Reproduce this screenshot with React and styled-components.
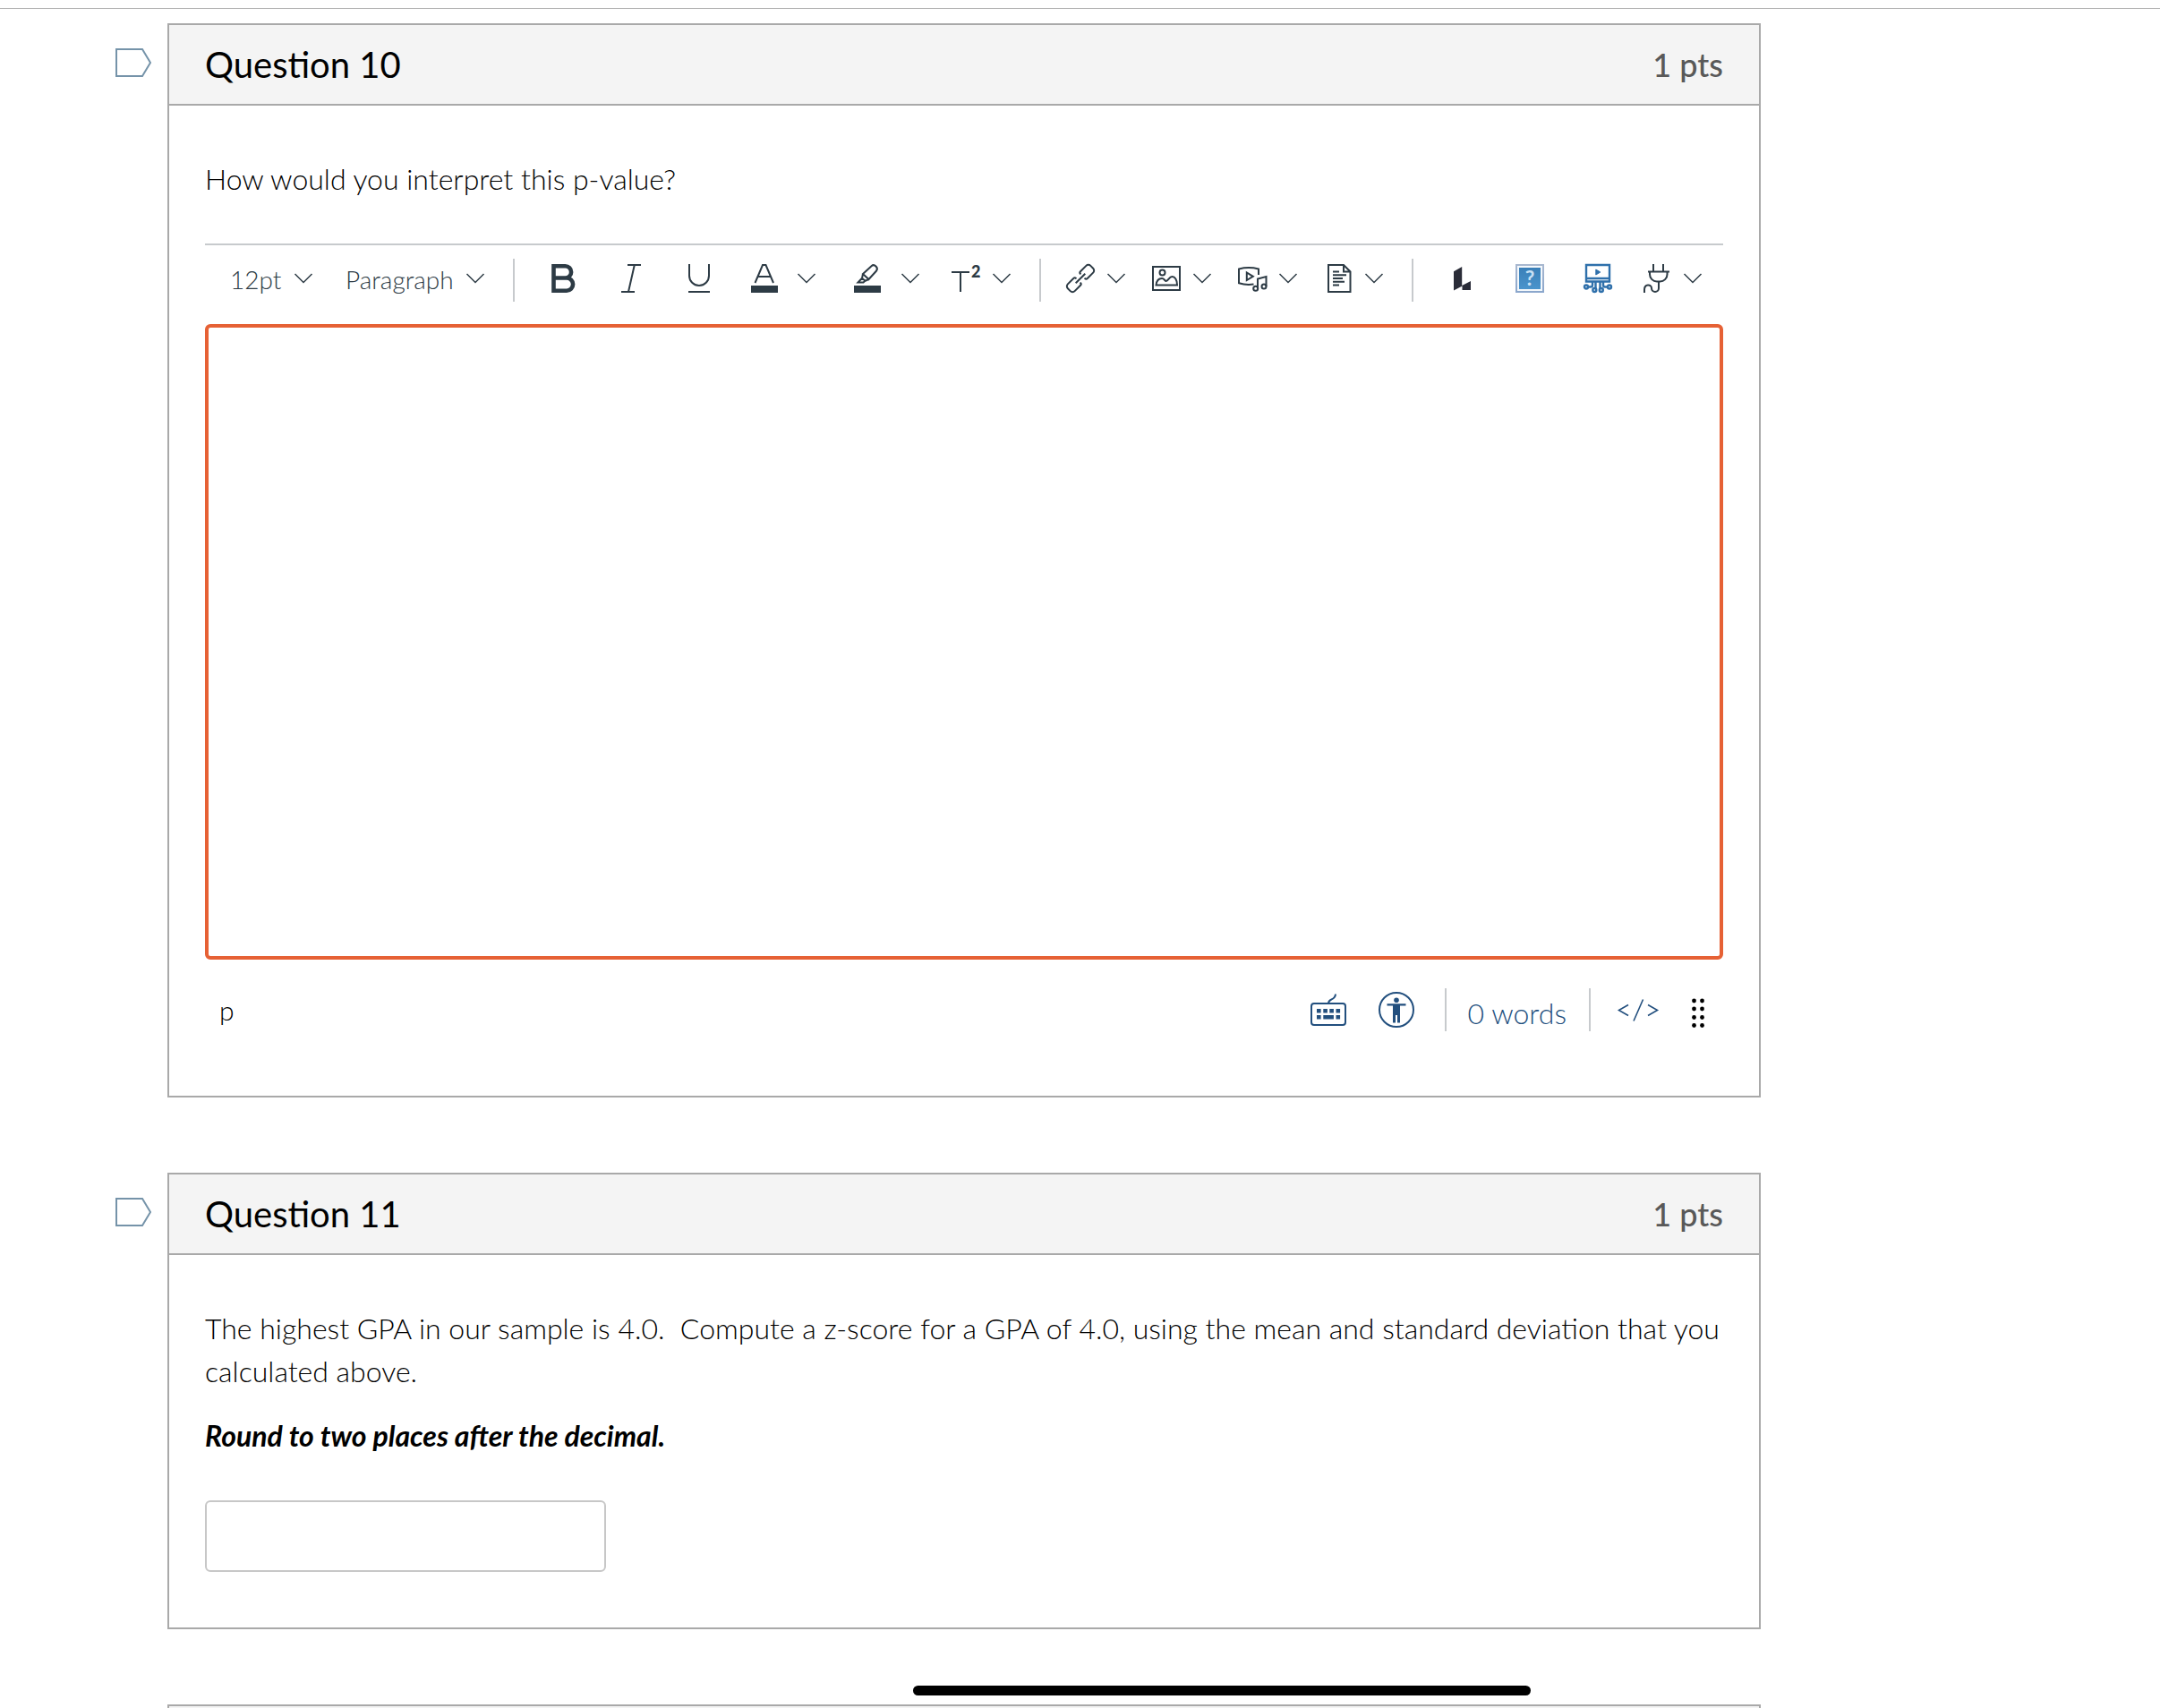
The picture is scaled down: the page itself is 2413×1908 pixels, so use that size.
import styled, { createGlobalStyle } from "styled-components";

const GlobalStyle = createGlobalStyle`
  * {
    box-sizing: border-box;
  }

  body {
    margin: 0;
    background: #fff;
    color: #000;
    font-family: Lato, "Noto Sans", sans-serif;
    font-size: 32px;
    font-weight: 300;
    line-height: 48px;
  }

  button,
  input,
  select,
  textarea {
    font: inherit;
    color: inherit;
  }
`;

/* ---------- icons ---------- */

const Stroke = styled.svg`
  display: block;
  flex: none;
  overflow: visible;
  fill: none;
  stroke: currentColor;
  stroke-width: ${({ weight }) => weight || 2};
`;

const Box32 = ({ children }) => (
  <Stroke width="32" height="32" viewBox="0 0 32 32">
    {children}
  </Stroke>
);

const Chevron = () => (
  <Stroke width="20" height="12" viewBox="0 0 20 12" weight="1.5">
    <path d="M0.5 1L10 10.5 19.5 1" />
  </Stroke>
);

const BoldIcon = () => (
  <Box32>
    <path
      strokeWidth="4.6"
      d="M5.5 2.3H18.5a6 6 0 0 1 0 13.2H5.5zM5.5 15.5H20a7 7 0 0 1 0 14.2H5.5z"
    />
  </Box32>
);

const ItalicIcon = () => (
  <Box32>
    <path d="M12 1h15M5 31h15M19.8 1L13 31" />
  </Box32>
);

const UnderlineIcon = () => (
  <Box32>
    <path d="M5 0v13a11 11 0 0 0 22 0V0M4 31h24" />
  </Box32>
);

const TextColorIcon = () => (
  <Box32>
    <path d="M5.5 21L14 1h3.500L26 21M9 14h13.500" />
    <path strokeWidth="8" d="M1 28h30" />
  </Box32>
);

const HighlightIcon = () => (
  <Box32>
    <path d="M10 11L19.500 2.200q2.500-2.200 5 .3t.6 5L16.500 17zM10 11l-1 4.800L4.500 20.500h6l1.500-1.500 4.500-2M9 15.800l3.500 3" />
    <path strokeWidth="8" d="M0 28h30" />
  </Box32>
);

const SuperText = styled.text`
  fill: currentColor;
  stroke: none;
  font-family: Lato, sans-serif;
  font-size: 18px;
  font-weight: 900;
`;

const SuperscriptIcon = () => (
  <Box32>
    <path d="M0 9h20M10 9v22" />
    <SuperText x="22" y="15">
      2
    </SuperText>
  </Box32>
);

const LinkIcon = () => (
  <Box32>
    <g transform="rotate(-45 16 16)">
      <path d="M12.500 19v.500a2 2 0 0 1-2 2H1.500A3.500 3.500 0 0 1-2 18v-4a3.500 3.500 0 0 1 3.500-3.500h9a2 2 0 0 1 2 2v.500" />
      <path d="M19.500 13v-.500a2 2 0 0 1 2-2h9A3.500 3.500 0 0 1 34 14v4a3.500 3.500 0 0 1-3.500 3.500h-9a2 2 0 0 1-2-2V19" />
      <path d="M8.500 16h15" />
    </g>
  </Box32>
);

const ImageIcon = () => (
  <Box32>
    <path d="M1 3h30v26H1z" />
    <circle cx="11.5" cy="9.5" r="3" />
    <path d="M4.500 23.500h23.500c0-6-2.500-9.500-5.500-9.500-3.500 0-4 4.500-7 5-1.500-.5-2-3-4.500-3-3.500 0-6 3-6.500 7.500z" />
  </Box32>
);

const MediaIcon = () => (
  <Box32>
    <path d="M23 12V5.500C16 3.700 8 3.700 1 5.500v15.800c5 1.500 11 2 16.500 1.200" />
    <path d="M9.800 9.500v8.500l7-4.200z" />
    <path d="M22 27.500V16.500l9.500-2.500v11" />
    <circle cx="19.7" cy="27.3" r="2.500" />
    <circle cx="29" cy="25" r="2.500" />
  </Box32>
);

const DocumentIcon = () => (
  <Box32>
    <path d="M5 1h17l7.500 7.500V31H5zM22 1v7.500h7.500" />
    <path d="M10 8.500h7M10 12.300h15M10 16h11M10 19.700h13M10 23.400h7" />
  </Box32>
);

const LucidIcon = () => (
  <Box32>
    <path
      fill="#2a2c38"
      stroke="none"
      d="M7 8.300L16.200 3v21L26 19v10H16.500v-4.500L7 29.500z"
    />
  </Box32>
);

const HelpMark = styled.text`
  fill: #c9e0f4;
  stroke: none;
  font-family: Lato, sans-serif;
  font-size: 23px;
  font-weight: 700;
  text-anchor: middle;
`;

const HelpIcon = () => (
  <Box32>
    <defs>
      <linearGradient id="helpFrame" x1="0" y1="0" x2="0" y2="1">
        <stop offset="0" stopColor="#a9b8d0" />
        <stop offset="1" stopColor="#8aa6cc" />
      </linearGradient>
      <linearGradient id="helpFill" x1="0" y1="0" x2="0" y2="1">
        <stop offset="0" stopColor="#3a7fb8" />
        <stop offset="1" stopColor="#4a94cc" />
      </linearGradient>
    </defs>
    <path stroke="none" fill="url(#helpFrame)" d="M0 0h32v32H0z" />
    <path stroke="none" fill="#f4f8fc" d="M2 2h28v28H2z" />
    <path stroke="none" fill="url(#helpFill)" d="M4 4h24v24H4z" />
    <HelpMark x="16" y="24">
      ?
    </HelpMark>
  </Box32>
);

const StudioIcon = () => (
  <Box32>
    <g stroke="#2f70ab" strokeWidth="2.400">
      <path d="M3 1h26v18.500H3zM3 16h26" />
      <path fill="#2f70ab" strokeWidth="1" d="M13.800 6v6l5-3z" />
      <path d="M10 20v3.500q0 2-2 2H5M13.500 20v7M18.500 20v7M22 20v3.500q0 2 2 2h3" />
      <circle cx="3" cy="25.5" r="2" />
      <circle cx="12.300" cy="29" r="2" />
      <circle cx="19.800" cy="29" r="2" />
      <circle cx="29" cy="25.5" r="2" />
    </g>
  </Box32>
);

const PlugIcon = () => (
  <Box32>
    <path d="M12 0v8M23 0v8M6 8.500h24M8 8.500v3a8 8 0 0 0 8 8h3.500a8 8 0 0 0 8-8v-3" />
    <path d="M18 19.500v7.500a4 4 0 0 1-8 0c0-5-8-5-8 1.500v3.500" />
  </Box32>
);

const KeyboardIcon = () => (
  <Stroke width="40" height="36" viewBox="0 0 40 36">
    <rect x="1" y="11" width="38" height="24" rx="3" />
    <path d="M20 11c0-6 7.500-3 8-10.500" />
    <path
      stroke="none"
      fill="currentColor"
      d="M7 17h4.600v4.600H7zM14.300 17h4.600v4.600h-4.600zM21.300 17h4.600v4.600h-4.600zM28.500 17h4.600v4.600h-4.600zM7 24h4.600v4.600H7zM14.300 24h11.600v4.600H14.300zM28.500 24h4.600v4.600h-4.600z"
    />
  </Stroke>
);

const AccessibilityIcon = () => (
  <Stroke width="40" height="40" viewBox="0 0 40 40">
    <circle cx="20" cy="20" r="19" />
    <g stroke="none" fill="currentColor">
      <circle cx="20" cy="9.300" r="2.800" />
      <path d="M9.500 13.200h21v2.300h-6.500V34.500h-3V26h-2v8.500h-3V15.500H9.500z" />
    </g>
  </Stroke>
);

const CodeIcon = () => (
  <Stroke width="46" height="26" viewBox="0 0 46 26" weight="1.6">
    <path d="M12 6.500L1.500 12.500 12 18.500M28.500 0.500L18 24.500M34 6.500l10.500 6-10.500 6" />
  </Stroke>
);

const GripIcon = () => (
  <Stroke width="16" height="34" viewBox="0 0 16 34">
    {[3, 12, 21.5, 30.5].map((y) => (
      <g key={y} stroke="none" fill="#000">
        <circle cx="3.500" cy={y} r="2.400" />
        <circle cx="12.500" cy={y} r="2.400" />
      </g>
    ))}
  </Stroke>
);

/* ---------- page ---------- */

const Page = styled.main`
  height: 100vh;
  overflow: hidden;
  display: flex;
  flex-direction: column;
`;

const TopEdge = styled.div`
  flex: none;
  height: 10px;
  border-bottom: 1px solid #b5b5b5;
`;

const QuestionList = styled.div`
  display: flex;
  flex-direction: column;
  gap: 84px;
  padding: 16px 446px 0 129px;
`;

const QuestionRow = styled.section`
  display: grid;
  grid-template-columns: 58px minmax(0, 1fr);
  align-items: start;
`;

const FlagButton = styled.button`
  margin: 28px 0 0;
  padding: 0;
  border: 0;
  background: none;
  color: #7593a9;
  justify-self: start;
`;

const Card = styled.div`
  grid-column: 2;
  border: 2px solid #a9a9a9;
`;

const CardHeader = styled.header`
  display: flex;
  justify-content: space-between;
  align-items: center;
  height: 90px;
  padding: 0 40px;
  background: #f4f4f4;
  border-bottom: 2px solid #a9a9a9;
`;

const Title = styled.h2`
  margin: 0;
  font-size: 40px;
  font-weight: 400;
`;

const Points = styled.span`
  font-size: 36px;
  font-weight: 500;
  color: #595959;
`;

const CardBody = styled.div`
  padding: 58px 40px 62px;
`;

const Prompt = styled.p`
  margin: 0 0 24px;
`;

const Hint = styled.label`
  display: block;
  margin-bottom: 48px;
  font-style: italic;
  font-weight: 700;
`;

const Answer = styled.input`
  display: block;
  width: 448px;
  height: 80px;
  padding: 0 16px;
  border: 2px solid #c7c7c7;
  border-radius: 6px;
  outline: none;
`;

/* ---------- editor ---------- */

const Toolbar = styled.div`
  display: flex;
  gap: 2px;
  margin-top: 48px;
  padding: 15px 0 25px 28px;
  border-top: 2px solid #c7cacd;
  color: #2d3b45;
`;

const Divider = styled.span`
  width: 2px;
  height: 48px;
  margin: 0 14px;
  background: #c7cacd;
`;

const ToolButton = styled.button`
  display: flex;
  align-items: center;
  height: 44px;
  padding: 0 20px 0 22px;
  border: 0;
  background: none;
`;

const MenuButton = styled(ToolButton)`
  gap: 14px;
  padding: 0 16px 0 12px;
`;

const SplitButton = styled(ToolButton)`
  gap: 21px;
  padding: 0 22px 0 19px;
`;

const Picker = styled.label`
  display: flex;
  align-items: center;
  gap: 14px;
  height: 44px;
  padding-right: ${({ $last }) => ($last ? 16 : 35)}px;
`;

const PickerSelect = styled.select`
  appearance: none;
  height: 44px;
  padding: 2px 0 0;
  border: 0;
  background: none;
  font-size: 28px;
  line-height: 42px;
`;

const EditArea = styled.textarea`
  display: block;
  width: 100%;
  height: 710px;
  padding: 16px;
  border: 4px solid #e66135;
  border-radius: 6px;
  outline: none;
  resize: none;
`;

const StatusBar = styled.div`
  display: flex;
  align-items: center;
  justify-content: space-between;
  margin: 32px 0 10px;
  padding: 0 20px 0 16px;
`;

const ElementPath = styled.span`
  font-size: 30px;
`;

const StatusTools = styled.div`
  display: flex;
  align-items: center;
  color: #224f7e;
`;

const StatusDivider = styled(Divider)`
  margin: 0 16px;
`;

const StatusButton = styled.button`
  display: flex;
  align-items: center;
  height: 48px;
  padding: 0 18px;
  border: 0;
  background: none;
`;

const WordCount = styled(StatusButton)`
  padding: 8px 9px 0 8px;
`;

const CodeButton = styled(StatusButton)`
  padding: 2px 14px 0;
`;

const Grip = styled(StatusButton)`
  padding: 8px 0 0 22px;
`;

const Question = ({ number, children }) => (
  <QuestionRow>
    <FlagButton aria-label={"Flag question " + number}>
      <Stroke width="40" height="32" viewBox="0 0 40 32">
        <path d="M1 1h29l9 15-9 15H1z" />
      </Stroke>
    </FlagButton>
    <Card>
      <CardHeader>
        <Title>Question {number}</Title>
        <Points>1 pts</Points>
      </CardHeader>
      <CardBody>{children}</CardBody>
    </Card>
  </QuestionRow>
);

const PendingQuestion = () => (
  <QuestionRow>
    <Card>
      <CardHeader />
    </Card>
  </QuestionRow>
);

const ToolbarPicker = ({ name, value, last }) => (
  <Picker $last={last}>
    <PickerSelect aria-label={name}>
      <option>{value}</option>
    </PickerSelect>
    <Chevron />
  </Picker>
);

const Menu = ({ name, icon }) => (
  <MenuButton aria-label={name}>
    {icon}
    <Chevron />
  </MenuButton>
);

const Split = ({ name, icon }) => (
  <SplitButton aria-label={name}>
    {icon}
    <Chevron />
  </SplitButton>
);

const Editor = () => (
  <>
    <Toolbar role="toolbar">
      <ToolbarPicker name="Font size" value="12pt" />
      <ToolbarPicker name="Block" value="Paragraph" last />
      <Divider />
      <ToolButton aria-label="Bold">
        <BoldIcon />
      </ToolButton>
      <ToolButton aria-label="Italic">
        <ItalicIcon />
      </ToolButton>
      <ToolButton aria-label="Underline">
        <UnderlineIcon />
      </ToolButton>
      <Split name="Text color" icon={<TextColorIcon />} />
      <Split name="Background color" icon={<HighlightIcon />} />
      <Menu name="Superscript" icon={<SuperscriptIcon />} />
      <Divider />
      <Menu name="Links" icon={<LinkIcon />} />
      <Menu name="Images" icon={<ImageIcon />} />
      <Menu name="Media" icon={<MediaIcon />} />
      <Menu name="Documents" icon={<DocumentIcon />} />
      <Divider />
      <ToolButton aria-label="Lucid">
        <LucidIcon />
      </ToolButton>
      <ToolButton aria-label="Help">
        <HelpIcon />
      </ToolButton>
      <ToolButton aria-label="Studio">
        <StudioIcon />
      </ToolButton>
      <Menu name="Apps" icon={<PlugIcon />} />
    </Toolbar>
    <EditArea aria-label="Answer" />
    <StatusBar>
      <ElementPath>p</ElementPath>
      <StatusTools>
        <StatusButton aria-label="Keyboard shortcuts">
          <KeyboardIcon />
        </StatusButton>
        <StatusButton aria-label="Accessibility checker">
          <AccessibilityIcon />
        </StatusButton>
        <StatusDivider />
        <WordCount>0 words</WordCount>
        <StatusDivider />
        <CodeButton aria-label="HTML editor">
          <CodeIcon />
        </CodeButton>
        <Grip aria-label="Resize">
          <GripIcon />
        </Grip>
      </StatusTools>
    </StatusBar>
  </>
);

// tablet home bar, floats over the page
const HomeBar = styled.div`
  position: fixed;
  bottom: 14px;
  left: 1020px;
  width: 690px;
  height: 11px;
  border-radius: 6px;
  background: #000;
`;

export default function App() {
  return (
    <Page>
      <GlobalStyle />
      <TopEdge />
      <QuestionList>
        <Question number={10}>
          How would you interpret this p-value?
          <Editor />
        </Question>
        <Question number={11}>
          <Prompt>
            The highest GPA in our sample is 4.0.&nbsp; Compute a z-score for a
            GPA of 4.0, using the mean and standard deviation that you
            calculated above.
          </Prompt>
          <Hint htmlFor="answer-11">
            Round to two places after the decimal.
          </Hint>
          <Answer id="answer-11" type="text" />
        </Question>
        <PendingQuestion />
      </QuestionList>
      <HomeBar />
    </Page>
  );
}
